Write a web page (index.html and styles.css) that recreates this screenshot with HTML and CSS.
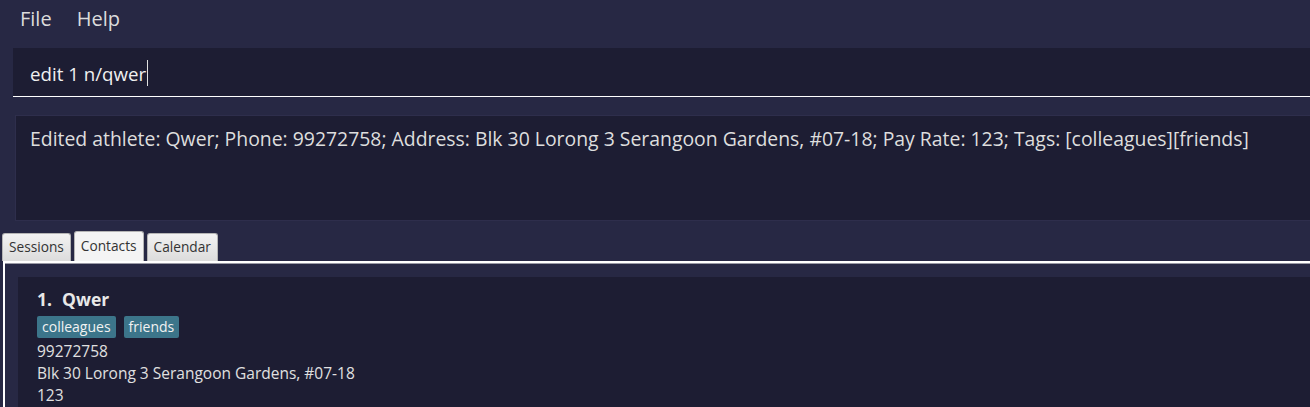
FILE: index.html
```html
<!DOCTYPE html>
<html>
<head>
<meta charset="utf-8">
<link rel="stylesheet" href="styles.css">
</head>
<body>
<div class="app">
  <nav class="menubar">
    <span class="menu-item">File</span>
    <span class="menu-item">Help</span>
  </nav>
  <div class="command-box">
    <span class="command-text">edit 1 n/qwer</span><span class="caret"></span>
  </div>
  <div class="result-box">
    Edited athlete: Qwer; Phone: 99272758; Address: Blk 30 Lorong 3 Serangoon Gardens, #07-18; Pay Rate: 123; Tags: [colleagues][friends]
  </div>
  <div class="tabs">
    <div class="tab">Sessions</div>
    <div class="tab tab-active">Contacts</div>
    <div class="tab">Calendar</div>
  </div>
  <div class="tab-content">
    <div class="card">
      <div class="card-title"><span class="card-index">1.</span>Qwer</div>
      <div class="tags">
        <span class="tag">colleagues</span>
        <span class="tag">friends</span>
      </div>
      <div class="card-line">99272758</div>
      <div class="card-line">Blk 30 Lorong 3 Serangoon Gardens, #07-18</div>
      <div class="card-line">123</div>
    </div>
  </div>
</div>
</body>
</html>
```
FILE: styles.css
```css
html, body {
  margin: 0;
  padding: 0;
  height: 100%;
  overflow: hidden;
}
body {
  background: #272844;
  font-family: "Open Sans", "Noto Sans", sans-serif;
  color: #e6e6e6;
}
.app {
  display: flex;
  flex-direction: column;
  height: 100%;
  overflow: hidden;
}
.app > * {
  flex-shrink: 0;
}
.menubar {
  display: flex;
  height: 40px;
  align-items: center;
  padding-left: 20px;
  gap: 25px;
  font-size: 20px;
  color: #dcdcdc;
  box-sizing: border-box;
  padding-bottom: 4px;
}
.command-box {
  margin: 8px 0 0 13px;
  height: 49px;
  background: #1d1d33;
  border-bottom: 1px solid #ffffff;
  box-sizing: border-box;
  display: flex;
  align-items: center;
  padding-left: 17px;
  padding-top: 2px;
  font-size: 18.7px;
  color: #f0f0f0;
}
.caret {
  display: inline-block;
  width: 1px;
  height: 26px;
  background: #e0e0e0;
  margin-left: 1px;
}
.result-box {
  margin: 18px 0 0 15px;
  height: 106px;
  box-sizing: border-box;
  background: #1d1d33;
  border: 1px solid #2e2e4c;
  border-right: none;
  padding: 10px 14px;
  font-size: 19.4px;
  color: #dedede;
  line-height: 26px;
}
.tabs {
  display: flex;
  align-items: flex-end;
  margin: 10px 0 0 2px;
  gap: 3px;
  height: 30px;
}
.tab {
  height: 28px;
  box-sizing: border-box;
  padding: 0 6px 2px;
  display: flex;
  align-items: center;
  font-size: 13.7px;
  color: #333;
  background: linear-gradient(#f2f2f2, #dcdcdc);
  border: 1px solid #b5b5b5;
  border-bottom: none;
  border-radius: 3px 3px 0 0;
}
.tab-active {
  height: 30px;
  background: #f4f4f4;
}
.tab-content {
  flex: 1 1 auto;
  min-height: 0;
  margin-left: 3px;
  border-top: 2px solid #ffffff;
  border-left: 2px solid #ffffff;
  box-shadow: inset 0 1px 0 #9a9aa6;
  padding: 14px 0 0 13px;
  display: flex;
  flex-direction: column;
  overflow: hidden;
}
.card {
  flex: 1 0 auto;
  background: #1d1d33;
  padding: 10px 19px;
}
.card-title {
  font-size: 17.5px;
  font-weight: 700;
  color: #e8e8e8;
  line-height: 24px;
}
.card-index {
  margin-right: 10px;
}
.tags {
  display: flex;
  gap: 8px;
  margin: 5px 0 2px;
}
.tag {
  background: #3c758a;
  color: #f2f2f2;
  font-size: 14px;
  padding: 0 5px;
  line-height: 22px;
  border-radius: 2px;
}
.card-line {
  font-size: 15.5px;
  line-height: 22px;
  color: #e0e0e0;
}
```
